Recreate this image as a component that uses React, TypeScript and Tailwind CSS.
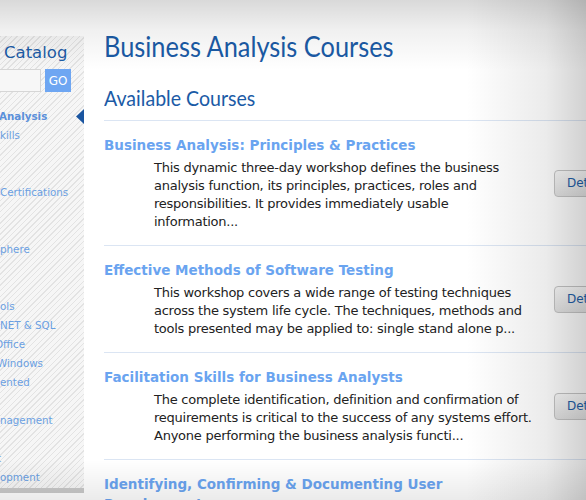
import React from "react";

const navItems: { text: string; bold?: boolean; shift?: string }[] = [
  { text: "Analysis", bold: true, shift: "-ml-[1px]" },
  { text: "kills" },
  { text: "" },
  { text: "" },
  { text: "Certifications" },
  { text: "" },
  { text: "" },
  { text: "phere" },
  { text: "" },
  { text: "" },
  { text: "ols" },
  { text: "NET & SQL" },
  { text: "Office", shift: "-ml-[5px]" },
  { text: "Windows", shift: "-ml-[3px]" },
  { text: "ented" },
  { text: "" },
  { text: "nagement" },
  { text: "" },
  { text: "t", shift: "-ml-[3px]" },
  { text: "opment" },
];

const courses = [
  {
    title: "Business Analysis: Principles & Practices",
    desc: "This dynamic three-day workshop defines the business analysis function, its principles, practices, roles and responsibilities. It provides immediately usable information...",
  },
  {
    title: "Effective Methods of Software Testing",
    desc: "This workshop covers a wide range of testing techniques across the system life cycle. The techniques, methods and tools presented may be applied to: single stand alone p...",
  },
  {
    title: "Facilitation Skills for Business Analysts",
    desc: "The complete identification, definition and confirmation of requirements is critical to the success of any systems effort. Anyone performing the business analysis functi...",
  },
  {
    title: "Identifying, Confirming & Documenting User Requirements",
    desc: "This course provides the skills needed to identify, confirm and document user requirements...",
  },
];

export default function App() {
  return (
    <div className="relative w-[586px] h-[500px] overflow-hidden bg-white font-['DejaVu_Sans',sans-serif]">
      <div className="flex">
        {/* Sidebar */}
        <aside className="w-[84px] shrink-0 mt-[36px] h-[457px] flex flex-col bg-[repeating-linear-gradient(135deg,#e3e3e3_0px,#e3e3e3_1px,#f6f6f6_1px,#f6f6f6_4px)] border-b-[5px] border-[#c9c9c9]">
          <div className="pl-[4px] pt-[5px] text-[16.5px] leading-[24px] text-[#1c5ca6]">Catalog</div>
          <div className="flex items-center gap-[4px] mt-[4px]">
            <div className="w-[41px] h-[23px] bg-[#f7f7f7] border border-[#d6d6d6] border-l-0" />
            <div className="w-[26px] h-[23px] bg-[#6ea6f2] text-white text-[12px] flex items-center justify-center">GO</div>
          </div>
          <ul className="mt-[15px] relative">
            {navItems.map((it, i) => (
              <li
                key={i}
                className={`relative h-[19px] text-[10.3px] leading-[19px] whitespace-nowrap ${it.bold ? "font-bold text-[#5b90da]" : "text-[#6a9fe2]"}`}
              >
                <span className={`block ${it.shift ?? ""}`}>{it.text}</span>
                {i === 0 && (
                  <svg className="absolute right-0 top-[2px]" width="8" height="15" viewBox="0 0 8 15">
                    <polygon points="8,0 0,7.5 8,15" fill="#1a55a0" />
                  </svg>
                )}
              </li>
            ))}
          </ul>
        </aside>

        {/* Main */}
        <main className="ml-[20px] w-[482px] shrink-0">
          <h1 className="mt-[29px] text-[29px] leading-[34px] text-[#1b5ba6] font-['Lato',sans-serif] whitespace-nowrap origin-left scale-x-[0.875]">
            Business Analysis Courses
          </h1>
          <h2 className="mt-[21px] text-[22px] leading-[28px] text-[#1b5ba6] font-['Lato',sans-serif] whitespace-nowrap origin-left scale-x-[0.89]">
            Available Courses
          </h2>
          <div className="mt-[8px]">
            {courses.map((c, i) => (
              <div key={i} className="border-t border-[#dbe5f3] flex items-center pt-[14px] pb-[14px]">
                <div className="w-[440px] shrink-0">
                  <div className="text-[13.5px] leading-[20px] font-bold text-[#6aa4f0]">{c.title}</div>
                  <p className="mt-[4px] ml-[50px] w-[380px] text-[13px] leading-[18px] tracking-[-0.25px] text-[#222222]">{c.desc}</p>
                </div>
                <button className="ml-[10px] shrink-0 h-[27px] w-[64px] rounded-[4px] border border-[#c6c6c6] bg-[linear-gradient(to_bottom,#fbfbfb,#e3e3e3)] text-left pl-[12px] text-[12px] text-[#1f5fa8]">
                  Details
                </button>
              </div>
            ))}
          </div>
        </main>
      </div>

      {/* Photo vignette */}
      <div className="pointer-events-none absolute inset-0 bg-[linear-gradient(to_bottom,rgba(0,0,0,0.15)_0px,rgba(0,0,0,0.06)_30px,rgba(0,0,0,0)_70px)]" />
      <div className="pointer-events-none absolute inset-0 bg-[linear-gradient(to_left,rgba(0,0,0,0.18)_0px,rgba(0,0,0,0.08)_40px,rgba(0,0,0,0)_120px)]" />
      <div className="pointer-events-none absolute inset-0 bg-[linear-gradient(to_top,rgba(0,0,0,0.08)_0px,rgba(0,0,0,0)_40px)]" />
    </div>
  );
}
